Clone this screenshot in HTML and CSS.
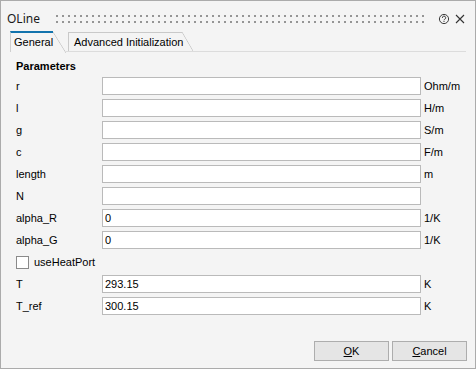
FILE: index.html
```html
<!DOCTYPE html>
<html>
<head>
<meta charset="utf-8">
<link rel="stylesheet" href="styles.css">
</head>
<body>
<div class="window">
  <div class="titlebar">
    <span class="title">OLine</span>
    <div class="grip"></div>
    <svg class="icon-help" width="12" height="12" viewBox="0 0 12 12">
      <circle cx="6" cy="6" r="4.6" fill="none" stroke="#3c3c3c" stroke-width="1"/>
      <path d="M4.4 4.9 A1.65 1.65 0 1 1 6.6 6.3 Q6 6.6 6 7.3" fill="none" stroke="#3c3c3c" stroke-width="1"/>
      <rect x="5.5" y="8" width="1" height="1" fill="#3c3c3c"/>
    </svg>
    <svg class="icon-close" width="10" height="10" viewBox="0 0 10 10">
      <path d="M1 1 L9 9 M9 1 L1 9" stroke="#333" stroke-width="1.1" fill="none"/>
    </svg>
  </div>
  <div class="tabbar">
    <div class="tab active"><span>General</span></div>
    <div class="tab"><span>Advanced Initialization</span></div>
  </div>
  <div class="pane">
    <div class="section">Parameters</div>
    <div class="params">
      <label class="lbl">r</label><input class="field" type="text" value=""><span class="unit">Ohm/m</span>
      <label class="lbl">l</label><input class="field" type="text" value=""><span class="unit">H/m</span>
      <label class="lbl">g</label><input class="field" type="text" value=""><span class="unit">S/m</span>
      <label class="lbl">c</label><input class="field" type="text" value=""><span class="unit">F/m</span>
      <label class="lbl">length</label><input class="field" type="text" value=""><span class="unit">m</span>
      <label class="lbl">N</label><input class="field" type="text" value=""><span class="unit"></span>
      <label class="lbl">alpha_R</label><input class="field" type="text" value="0"><span class="unit">1/K</span>
      <label class="lbl">alpha_G</label><input class="field" type="text" value="0"><span class="unit">1/K</span>
      <div class="checkrow"><span class="checkbox"></span><span>useHeatPort</span></div>
      <label class="lbl">T</label><input class="field" type="text" value="293.15"><span class="unit">K</span>
      <label class="lbl">T_ref</label><input class="field" type="text" value="300.15"><span class="unit">K</span>
    </div>
  </div>
  <div class="footer">
    <button class="btn"><u>O</u>K</button>
    <button class="btn"><u>C</u>ancel</button>
  </div>
</div>
</body>
</html>
```

FILE: styles.css
```css
html, body {
  margin: 0;
  padding: 0;
  background: #f4f4f4;
}
.window {
  width: 476px;
  height: 369px;
  box-sizing: border-box;
  border: 1px solid #ababab;
  background: #f4f4f4;
  display: flex;
  flex-direction: column;
  font-family: "Liberation Sans", Arial, sans-serif;
  font-size: 11px;
  color: #000;
}
.titlebar {
  height: 24px;
  margin-top: 6px;
  padding: 0 10px 0 6px;
  display: flex;
  align-items: center;
}
.title {
  font-family: "Noto Sans", sans-serif;
  font-size: 12px;
  line-height: 16px;
  color: #1a1a1a;
}
.grip {
  flex: 1;
  height: 8px;
  margin: 0 10px 0 16px;
  background-image:
    repeating-linear-gradient(to bottom, transparent 0 2px, #f4f4f4 2px 6px),
    repeating-linear-gradient(to right, #959595 0 2px, transparent 2px 6px);
}
.icon-help {
  margin-right: 5px;
}
.tabbar {
  margin: 0 9px 0 9px;
  height: 20px;
  display: flex;
  align-items: flex-end;
  border-bottom: 1px solid #dcdcdc;
}
.tab {
  position: relative;
  height: 19px;
  display: flex;
  align-items: center;
  box-sizing: border-box;
  padding-left: 6px;
  margin-left: 2px;
  width: 125px;
}
.tab::before {
  content: "";
  position: absolute;
  left: 0;
  top: 0;
  bottom: 0;
  right: 11px;
  border-left: 1px solid #c9c9c9;
  border-top: 1px solid #c9c9c9;
}
.tab::after {
  content: "";
  position: absolute;
  right: 0;
  top: 0;
  width: 11px;
  height: 100%;
  background: linear-gradient(to top right, transparent calc(50% - 0.7px), #c9c9c9 50%, transparent calc(50% + 0.7px));
}
.tab.active {
  height: 21px;
  width: 56px;
  margin-left: 0;
  margin-bottom: -1px;
  padding-left: 4px;
  background: #f4f4f4;
}
.tab.active::before {
  right: 13px;
  border-top: 2px solid #1273ad;
  border-left: 1px solid #cfcfcf;
}
.tab.active::after {
  width: 13px;
  top: 1px;
}
.tab span {
  position: relative;
  line-height: 14px;
  margin-top: 1px;
}
.pane {
  padding-left: 15px;
}
.section {
  font-weight: bold;
  line-height: 14px;
  margin-top: 7px;
  margin-bottom: 4px;
}
.params {
  display: grid;
  grid-template-columns: 83px 319px auto;
  grid-auto-rows: 18px;
  column-gap: 3px;
  row-gap: 4px;
  align-items: center;
}
.lbl {
  line-height: 14px;
}
.field {
  box-sizing: border-box;
  height: 18px;
  width: 319px;
  margin: 0;
  border: 1px solid #bababa;
  background: #fff;
  padding: 0 2px;
  font-family: "Liberation Sans", Arial, sans-serif;
  font-size: 11px;
  color: #000;
  outline: none;
}
.unit {
  line-height: 14px;
}
.checkrow {
  grid-column: 1 / 4;
  display: flex;
  align-items: center;
  gap: 5px;
}
.checkbox {
  width: 13px;
  height: 13px;
  box-sizing: border-box;
  border: 1px solid #8a8a8a;
  background: #fff;
}
.footer {
  margin-top: auto;
  display: flex;
  justify-content: flex-end;
  gap: 3px;
  padding: 0 8px 7px 0;
}
.btn {
  width: 75px;
  height: 20px;
  box-sizing: border-box;
  border: 1px solid #adadad;
  background: #e5e5e5;
  font-family: "Liberation Sans", Arial, sans-serif;
  font-size: 11px;
  color: #000;
  padding: 0;
  margin: 0;
}
.btn u {
  text-decoration: underline;
}
```
